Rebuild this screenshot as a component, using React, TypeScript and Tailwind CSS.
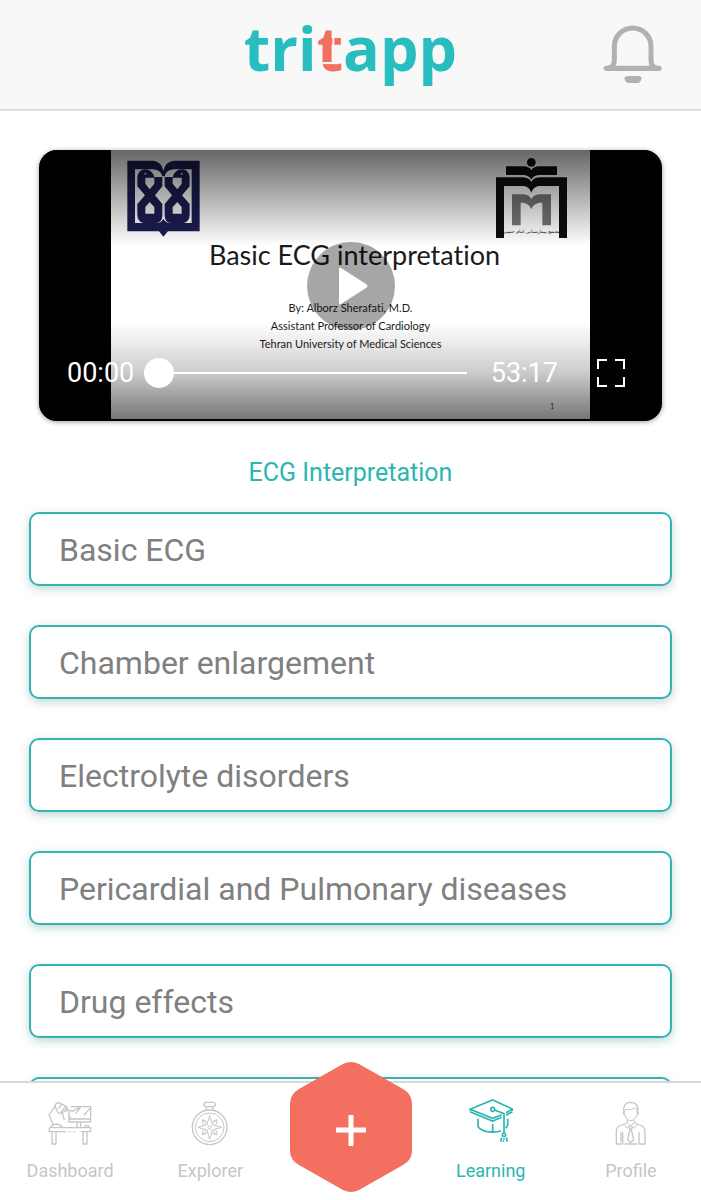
import { useState } from "react"
import type { ReactNode } from "react"

const chapters = [
  "Basic ECG",
  "Chamber enlargement",
  "Electrolyte disorders",
  "Pericardial and Pulmonary diseases",
  "Drug effects",
]

function BellIcon() {
  return (
    <svg className="h-[60px] w-[60px]" viewBox="0 0 180 180" fill="none" stroke="#b1b1b1" strokeWidth="16" strokeLinecap="round" aria-hidden="true">
      <path d="M10 136H168" />
      <path d="M20 134Q34 130 34 110V70a55 55 0 0 1 110 0v40q0 20 14 24" strokeWidth="15" />
      <path d="M76 159h28q12 0 12 8-4 17-26 17t-26-17q0-8 12-8z" fill="#b1b1b1" stroke="none" />
    </svg>
  )
}

function UniversityLogo() {
  const snake =
    "M80 80Q84 57 103 57Q124 58 131 80H155V108L133 135L155 161V196Q154 218 134 218H98Q80 214 80 192V161L103 135L80 108ZM104 82V100L117 117L131 100V82ZM104 190H131V170L117 155L104 170Z"
  return (
    <svg className="h-[77px] w-[73px]" viewBox="49 29 219 231" fill="#1c1d52" aria-hidden="true">
      <path
        fillRule="evenodd"
        d="M50 31H128Q152 33 158 62Q164 33 190 31H267V243H172L158 259L145 243H50ZM73 57V218H138Q150 219 158 206Q167 219 179 218H243V57H190Q164 60 163 78H154Q153 60 127 57Z"
      />
      <path fillRule="evenodd" d={snake} />
      <path fillRule="evenodd" d={snake} transform="matrix(-1 0 0 1 317 0)" />
      <circle cx="104" cy="70" r="3" fill="#c9c9cf" />
      <circle cx="213" cy="70" r="3" fill="#c9c9cf" />
    </svg>
  )
}

function HospitalLogo() {
  return (
    <svg className="h-[81px] w-[72px]" viewBox="0 0 216 243" fill="#0d0e10" aria-hidden="true">
      <circle cx="106" cy="13" r="13" />
      <path d="M30 25H82Q101 26 106 37Q111 26 130 25H183V51H128Q112 53 106 65Q100 53 84 51H30Z" />
      <path d="M0 58H82Q101 60 106 72Q111 60 130 58H213V240H189V84H128Q112 86 106 104Q100 86 84 84H24V240H0Z" />
      <path d="M48 109H82Q101 111 106 124Q111 111 130 109H165V202H139V134H130Q111 138 106 154Q101 138 82 134H74V202H48Z" fill="#777777" />
      <text x="106" y="226" textAnchor="middle" fontSize="14" direction="rtl" fontFamily="DejaVu Sans, sans-serif">
        مجتمع بیمارستانی امام خمینی
      </text>
    </svg>
  )
}

function DashboardIcon() {
  return (
    <svg className="h-11 w-11" viewBox="0 0 132 132" fill="none" stroke="currentColor" strokeWidth="4" strokeLinejoin="round" aria-hidden="true">
      <path d="M4 80H128V92H98M82 92H76M68 92H62M54 92H4V80" />
      <path d="M12 92V129H24V92M105 92V129H117V92" />
      <path d="M63 54H128V63H63ZM63 54V29L50 23M68 17H128V54" />
      <path d="M63 29L76 30L98 17M83 38L97 19M108 42L126 22" />
      <path d="M87 63V78M98 63V78M109 80Q111 71 121 74L122 80" />
      <path d="M23 12L3 42L17 74M21 15Q24 3 36 6L50 14Q61 17 57 28L43 34Q35 43 27 30ZM31 23L43 7M38 35L53 16M43 36L49 57" />
      <path d="M8 80Q9 70 20 70Q37 68 44 80M66 55V45" />
    </svg>
  )
}

function ExplorerIcon() {
  return (
    <svg className="h-11 w-11" viewBox="0 0 132 132" fill="none" stroke="currentColor" strokeWidth="4" strokeLinejoin="round" aria-hidden="true">
      <circle cx="65" cy="79" r="52" />
      <circle cx="65" cy="79" r="43" strokeWidth="3" />
      <path d="M55 27V17Q48 16 48 10Q48 4 55 4H75Q82 4 82 10Q82 17 75 17V27M57 17H73" />
      <path d="M65 43L73 71L101 79L73 87L65 115L57 87L29 79L57 71Z" strokeWidth="3" />
      <path d="M58 62L44 56Q40 67 48 73M72 62L86 56Q90 67 82 73M58 96L44 102Q40 91 48 85M72 96L86 102Q90 91 82 85M44 56L57 71M86 56L73 71M44 102L57 87M86 102L73 87" strokeWidth="3" />
      <circle cx="65" cy="79" r="5" strokeWidth="3" />
    </svg>
  )
}

function LearningIcon() {
  return (
    <svg className="h-11 w-11" viewBox="0 0 132 132" fill="none" stroke="currentColor" strokeWidth="5" aria-hidden="true">
      <path d="M3 35V31L71 3L130 30V36M3 31L71 58L98 47M111 41L130 31M3 38L71 66L98 55M111 49L130 38" />
      <circle cx="71" cy="31" r="6" />
      <path d="M77 33L105 44V102" />
      <path d="M27 59V82Q31 91 50 97Q75 102 96 96M71 75V99M116 59V79L110 88" />
      <circle cx="105" cy="107" r="5" />
      <path d="M98 115L95 128M105 118V122M112 115L115 128M103 124V128" />
    </svg>
  )
}

function ProfileIcon() {
  return (
    <svg className="h-11 w-11" viewBox="0 0 132 132" fill="none" stroke="currentColor" strokeWidth="4" strokeLinejoin="round" aria-hidden="true">
      <path d="M46 41Q38 5 65 4Q93 5 85 41" />
      <path d="M46 31Q42 31 43 37Q44 43 48 43Q52 58 65 59Q79 58 83 43Q87 43 88 37Q88 31 84 31Q85 24 80 20Q65 28 49 26Q46 28 46 34" strokeWidth="3" />
      <path d="M55 57V65L65 76L76 65V57M55 63L47 69L54 82L65 73L76 82L84 69L76 63" strokeWidth="3" />
      <path d="M60 76L63 86L56 116L65 125L74 116L67 86L70 76M61 85H70" />
      <path d="M47 69L31 75Q22 79 22 92V129H41V94M84 69L99 75Q108 79 108 92V129H90V94M47 129H84M36 92V123" />
    </svg>
  )
}

function Header() {
  return (
    <header className="relative flex h-[111px] shrink-0 items-start justify-center border-b-2 border-[#dcdcdc] bg-[#f8f8f8]">
      <h1 className="pt-2 font-['Open_Sans',sans-serif] text-[61px] leading-[80px] font-bold text-[#28bdbf]">
        tri
        <span className="relative text-[#f37060]">
          t
          {/* cuts through the coral letter */}
          <svg className="absolute inset-0 h-full w-full" viewBox="0 0 26 80" preserveAspectRatio="none" stroke="#f8f8f8" aria-hidden="true">
            <path d="M3 55H17" strokeWidth="2" />
            <path d="M16 30V39" strokeWidth="2" />
          </svg>
        </span>
        app
      </h1>
      <button className="absolute top-[23px] right-[38px]" aria-label="Notifications">
        <BellIcon />
      </button>
    </header>
  )
}

function Slide() {
  return (
    <div className="mx-auto flex h-[269px] w-[77%] flex-col bg-white font-[Lato,sans-serif] text-[#1d1d1d]">
      <div className="flex items-start justify-between pt-2 pr-[22px] pl-4">
        <div className="pt-0.5">
          <UniversityLogo />
        </div>
        <HospitalLogo />
      </div>
      <h2 className="pl-2 text-center text-[27px] leading-8 font-normal text-[#1a1a1a] [font-variant-ligatures:none]">
        Basic ECG interpretation
      </h2>
      <div className="mt-7 text-center text-[11px] leading-[18px] [font-variant-ligatures:none]">
        <p>By: Alborz Sherafati, M.D.</p>
        <p>Assistant Professor of Cardiology</p>
        <p>Tehran University of Medical Sciences</p>
      </div>
      <p className="mt-auto pr-9 pb-2 text-right text-[7px] text-gray-700">1</p>
    </div>
  )
}

function VideoPlayer() {
  const [position, setPosition] = useState(0)

  return (
    <section className="relative mx-[39px] mt-[39px] h-[271px] shrink-0 overflow-hidden rounded-[18px] bg-black shadow-[0_1px_5px_rgba(0,0,0,0.4)]">
      <Slide />
      <div className="absolute inset-x-0 top-0 h-[96px] bg-linear-to-b from-black/60 to-transparent" />
      <div className="absolute inset-x-0 bottom-0 h-[98px] bg-linear-to-t from-black/55 via-black/20 to-transparent" />
      <div className="absolute inset-0 flex items-center justify-center">
        <button className="flex h-[88px] w-[88px] items-center justify-center rounded-full bg-black/35" aria-label="Play">
          <svg className="ml-1 h-10 w-8" viewBox="0 0 32 40" fill="white" aria-hidden="true">
            <path d="M2 3Q2 1 4 2L29 18Q32 20 29 22L4 38Q2 39 2 37Z" />
          </svg>
        </button>
      </div>
      <div className="absolute inset-x-0 bottom-[30px] flex items-center pr-9 pl-7 text-[27px] leading-9 text-white">
        <span>00:00</span>
        <input
          type="range"
          min={0}
          max={3197}
          value={position}
          onChange={(e) => setPosition(Number(e.target.value))}
          aria-label="Seek"
          className="mr-2 ml-2.5 h-[30px] min-w-0 flex-1 appearance-none bg-transparent [&::-webkit-slider-runnable-track]:h-[2px] [&::-webkit-slider-runnable-track]:bg-white [&::-webkit-slider-thumb]:-mt-[14px] [&::-webkit-slider-thumb]:h-[30px] [&::-webkit-slider-thumb]:w-[30px] [&::-webkit-slider-thumb]:appearance-none [&::-webkit-slider-thumb]:rounded-full [&::-webkit-slider-thumb]:bg-white"
        />
        <span className="ml-4">53:17</span>
        <button className="ml-[38px]" aria-label="Full screen">
          <svg className="h-[30px] w-[30px]" viewBox="0 0 30 30" fill="none" stroke="white" strokeWidth="2" aria-hidden="true">
            <path d="M2 11V2H11M19 2H28V11M28 19V28H19M11 28H2V19" />
          </svg>
        </button>
      </div>
    </section>
  )
}

function NavItem({ label, active, children }: { label: string; active?: boolean; children: ReactNode }) {
  return (
    <a
      href="#"
      aria-current={active ? "page" : undefined}
      className={`flex flex-1 flex-col items-center text-[18px] leading-6 ${active ? "text-[#2bb5b3]" : "text-[#c6c6c6]"}`}
    >
      <span className={active ? "mt-4 mb-4" : "mt-[18px] mb-3.5"}>{children}</span>
      {label}
    </a>
  )
}

function BottomNav() {
  return (
    <nav className="relative z-10 flex h-[119px] shrink-0 border-t-2 border-[#d8d8d8] bg-white">
      <NavItem label="Dashboard">
        <DashboardIcon />
      </NavItem>
      <NavItem label="Explorer">
        <ExplorerIcon />
      </NavItem>
      <div className="flex flex-1 justify-center">
        <button className="-mt-[21px] h-[130px] w-[124px] shrink-0" aria-label="Add">
          <svg className="h-full w-full" viewBox="0 0 124 130" aria-hidden="true">
            <path
              d="M54 2Q62 -2 70 2L114 27Q123 32 123 42V89Q123 98 114 103L70 128Q62 132 54 128L10 103Q1 98 1 89V42Q1 32 10 27Z"
              fill="#f37060"
            />
            <path d="M62 53V84M47 68H77" stroke="white" strokeWidth="5" />
          </svg>
        </button>
      </div>
      <NavItem label="Learning" active>
        <LearningIcon />
      </NavItem>
      <NavItem label="Profile">
        <ProfileIcon />
      </NavItem>
    </nav>
  )
}

function ChapterButton({ title }: { title?: string }) {
  return (
    <button
      aria-label={title ?? "More chapters"}
      className="block h-[74px] w-full rounded-[10px] border-2 border-[#35b3b1] bg-white px-7 pt-0.5 text-left text-[32px] text-[#808080] shadow-[0_3px_10px_rgba(40,120,120,0.3)]"
    >
      {title}
    </button>
  )
}

export default function App() {
  return (
    <div className="flex h-screen flex-col bg-white font-[Roboto,sans-serif]">
      <Header />
      <main className="flex min-h-0 flex-1 flex-col overflow-y-auto [scrollbar-width:none]">
        <VideoPlayer />
        <h2 className="mt-9 text-center text-[25px] leading-8 text-[#2bb5b3]">ECG Interpretation</h2>
        <ul className="mt-[23px] flex flex-col gap-[39px] px-[29px] pb-10">
          {chapters.map((chapter) => (
            <li key={chapter}>
              <ChapterButton title={chapter} />
            </li>
          ))}
          <li>
            <ChapterButton />
          </li>
        </ul>
      </main>
      <BottomNav />
    </div>
  )
}
